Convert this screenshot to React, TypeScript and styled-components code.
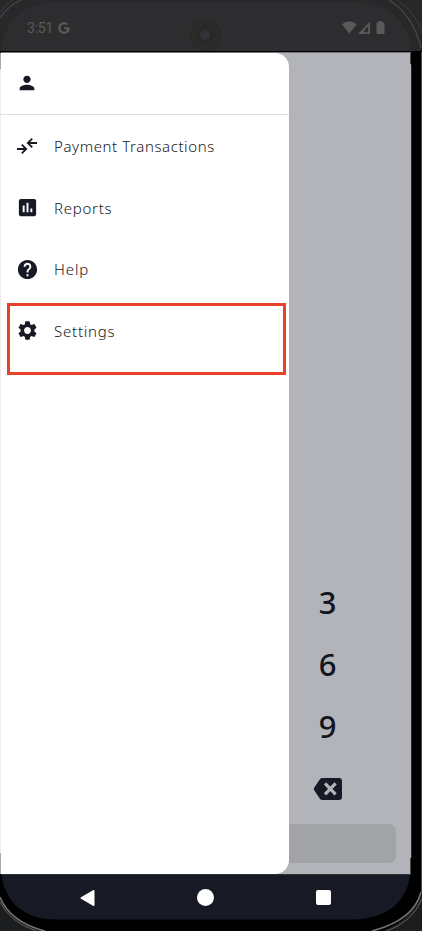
import React from "react";
import styled, { createGlobalStyle } from "styled-components";
import { MdPerson, MdInsertChart, MdHelp, MdSettings } from "react-icons/md";
import { FaGoogle } from "react-icons/fa";

const GlobalStyle = createGlobalStyle`
  * { box-sizing: border-box; }
  body { margin: 0; background: #1c1d1e; }
`;

const ink = "#171924";

const Device = styled.div`
  position: relative;
  display: grid;
  grid-template-rows: 51px 824px 56px;
  width: 422px;
  height: 931px;
  overflow: hidden;
  background: #000;
  font-family: "Noto Sans", sans-serif;
`;

const StatusBar = styled.header`
  display: flex;
  align-items: flex-start;
  justify-content: space-between;
  padding: 21px 37px 0 27px;
  background: #2d2d2f;
  color: #5a5a5c;
`;

const StatusGroup = styled.div`
  display: flex;
  align-items: center;
  gap: 5px;
  height: 14px;
`;

const Clock = styled.span`
  font: 400 14px/14px Roboto, sans-serif;
  letter-spacing: -0.2px;
`;

const Screen = styled.main`
  display: grid;
  grid-template-columns: 288px 122px;
  margin: 1px 11px 0 1px;
  border-top: 1px solid #77787b;
  border-bottom: 1px solid #303136;
  background: #b3b4b9;
  overflow: hidden;
`;

const Drawer = styled.nav`
  display: flex;
  flex-direction: column;
  background: #fff;
  border-radius: 0 14px 14px 0;
`;

const Account = styled.div`
  display: flex;
  height: 62px;
  padding: 19px 0 0 15px;
  border-bottom: 1px solid #dedee0;
  color: ${ink};
`;

const MenuItem = styled.a<{ $spacing: number }>`
  display: grid;
  grid-template-columns: 22px 1fr;
  column-gap: 16px;
  align-items: center;
  height: 61.7px;
  padding: 0 0 0 15px;
  color: ${ink};
  font: 300 15px/22px "Noto Sans", sans-serif;
  letter-spacing: ${(p) => p.$spacing}px;
`;

const MenuIcon = styled.span`
  display: grid;
  place-items: center;
  height: 24px;
`;

const Highlight = styled.div`
  position: absolute;
  left: 7px;
  top: 303px;
  width: 279px;
  height: 72px;
  border: 3px solid #e8412a;
`;

const Keypad = styled.section`
  display: flex;
  flex-direction: column;
  justify-content: flex-end;
  padding-bottom: 11px;
`;

const Key = styled.div`
  display: grid;
  place-items: center;
  width: 77px;
  height: 62px;
  padding-bottom: 2px;
  color: #121420;
  font: 500 31px/40px "Noto Sans", sans-serif;
`;

const Digit = styled(Key)`
  padding-bottom: 4px;
`;

const ChargeButton = styled.div`
  height: 39px;
  margin: 3px 15px 0 0;
  border-radius: 0 7px 7px 0;
  background: #a2a3a7;
`;

const SystemNav = styled.footer`
  display: grid;
  grid-template-columns: repeat(3, 118px);
  justify-content: center;
  height: 45px;
  margin: 0 11px 0 0;
  background: ${ink};
`;

const NavSlot = styled.div`
  display: grid;
  place-items: center;
`;

const HomeDot = styled.span`
  width: 17px;
  height: 17px;
  border-radius: 50%;
  background: #fff;
`;

const RecentSquare = styled.span`
  width: 15px;
  height: 15px;
  border-radius: 2px;
  background: #fff;
`;

const Bezel = styled.svg`
  position: absolute;
  inset: 0;
  pointer-events: none;
`;

const TransferIcon = () => (
  <svg width="22" height="20" viewBox="0 0 22 20" fill="none" stroke={ink} strokeWidth="1.8">
    <path d="M1 13H10M5.8 8.6L10.2 13L5.8 17.4M21 7H12M16.2 2.6L11.8 7L16.2 11.4" />
  </svg>
);

const BackspaceIcon = () => (
  <svg width="30" height="24" viewBox="0 0 30 24">
    <path d="M9.3 1H26a3 3 0 0 1 3 3V20a3 3 0 0 1-3 3H9.3a3 3 0 0 1-2.4-1.2L1.2 13.3a2.2 2.2 0 0 1 0-2.6L6.9 2.2A3 3 0 0 1 9.3 1Z" fill={ink} />
    <path d="M12 6.4L22.6 17.4M22.6 6.4L12 17.4" stroke="#b3b4b9" strokeWidth="3.2" />
  </svg>
);

const SignalIcons = () => (
  <svg width="43" height="14" viewBox="0 0 43 14" fill="currentColor">
    <path d="M0 3.2Q7.3-2.6 14.6 3.2L7.3 12.7Z" />
    <path fillRule="evenodd" d="M16 13L28 .8V13ZM22 11.2H26.2V5.1L22 9.4Z" />
    <path d="M35.5 1.5H36.5V0h4v1.5h1a1 1 0 0 1 1 1V12a1 1 0 0 1-1 1h-6a1 1 0 0 1-1-1V2.5a1 1 0 0 1 1-1Z" />
  </svg>
);

const DeviceEdge = () => (
  <Bezel width="422" height="931" viewBox="0 0 422 931" fill="none">
    <path d="M0 0H422V51H411C409 23 391 3 355 2H57C21 3 3 23 1 51H0Z" fill="#28282a" />
    <path d="M0 18Q8 6 21 0M389 0Q413 15 421 48" stroke="#464648" strokeWidth="1.3" />
    <path d="M0 12Q6 4 13 0M397 0Q414 11 422 31" stroke="#3d3d3f" />
    <path d="M0 875H1.5C5 902 24 919.5 55 919.5H356C388 918 407 901 410 875H422V931H0Z" fill="#000" />
    <path d="M0 898Q10 921 43 931H0ZM422 890Q414 919 382 931H422Z" fill="#1c1d1e" />
    <path d="M0 897Q10 922 45 931M421 892Q414 920 372 931" stroke="#737373" strokeWidth="1.5" />
    <path d="M0 902Q10 922 36 931M422 899Q412 922 387 931" stroke="#626262" />
    <path d="M421.5 52V892" stroke="#4a4a4b" />
    <path d="M.5 53V69M.5 853V874" stroke="#aaa" />
    <path d="M.5 69V853" stroke="#eee" />
    <path d="M411.5 65V858" stroke="#242527" />
    <path d="M410.5 53V64M410.5 858V874" stroke="#4b4c4e" />
    <circle cx="205.5" cy="35" r="15" fill="#2b2b2c" stroke="#272728" />
    <circle cx="205.5" cy="35" r="10" fill="#282829" />
    <circle cx="205" cy="35" r="5" fill="#323335" />
    <circle cx="207" cy="34" r="2" fill="#37344a" />
  </Bezel>
);

const menu = [
  { label: "Payment Transactions", icon: <TransferIcon />, spacing: 0.59 },
  { label: "Reports", icon: <MdInsertChart size={23} />, spacing: 0.72 },
  { label: "Help", icon: <MdHelp size={23} />, spacing: 0.9 },
  { label: "Settings", icon: <MdSettings size={23} />, spacing: 0.77 },
];

export default function App() {
  return (
    <>
      <GlobalStyle />
      <Device>
        <StatusBar>
          <StatusGroup>
            <Clock>3:51</Clock>
            <FaGoogle size={12} />
          </StatusGroup>
          <StatusGroup>
            <SignalIcons />
          </StatusGroup>
        </StatusBar>
        <Screen>
          <Drawer>
            <Account>
              <MdPerson size={22} />
            </Account>
            {menu.map((item) => (
              <MenuItem key={item.label} $spacing={item.spacing}>
                <MenuIcon>{item.icon}</MenuIcon>
                {item.label}
              </MenuItem>
            ))}
          </Drawer>
          <Keypad>
            <Digit>3</Digit>
            <Digit>6</Digit>
            <Digit>9</Digit>
            <Key>
              <BackspaceIcon />
            </Key>
            <ChargeButton />
          </Keypad>
        </Screen>
        <SystemNav>
          <NavSlot>
            <svg width="16" height="18" viewBox="0 0 16 18">
              <path d="M1.5 9L13.5 2V16Z" fill="#fff" stroke="#fff" strokeWidth="2" strokeLinejoin="round" />
            </svg>
          </NavSlot>
          <NavSlot>
            <HomeDot />
          </NavSlot>
          <NavSlot>
            <RecentSquare />
          </NavSlot>
        </SystemNav>
        <DeviceEdge />
        <Highlight />
      </Device>
    </>
  );
}
